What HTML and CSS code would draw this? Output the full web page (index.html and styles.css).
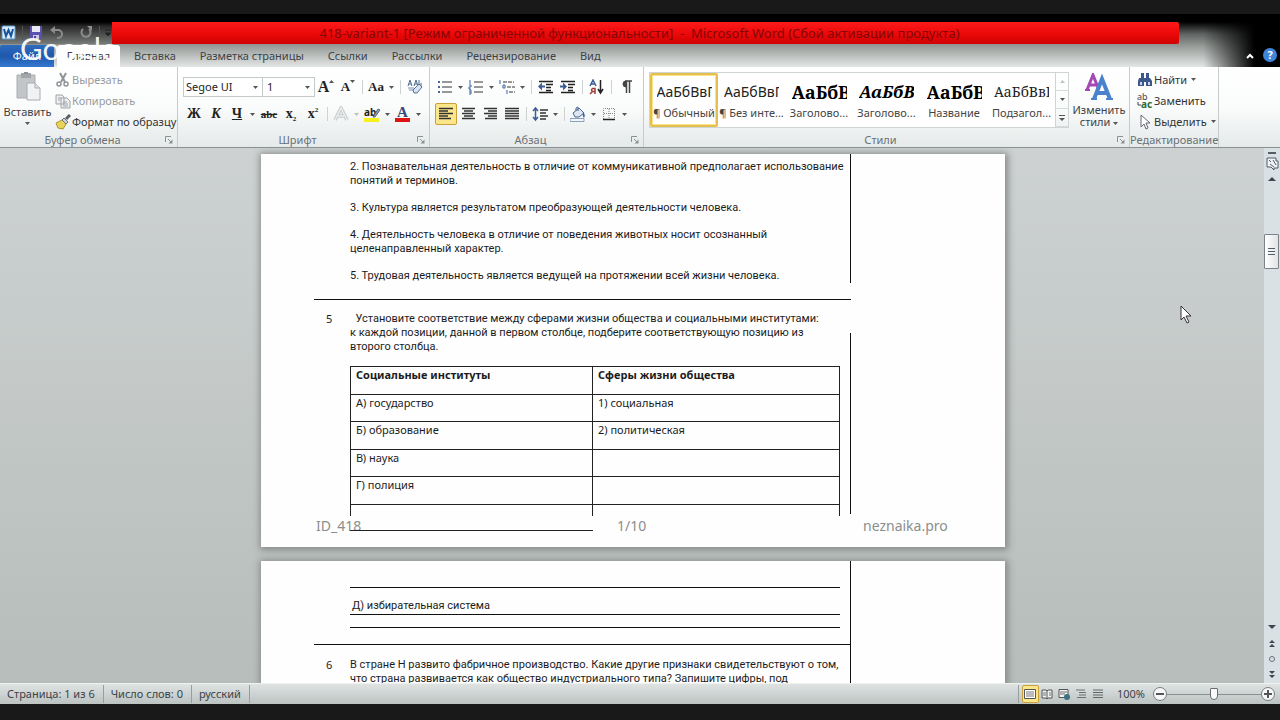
FILE: index.html
```html
<!DOCTYPE html>
<html lang="ru">
<head>
<meta charset="utf-8">
<title>418-variant-1 - Microsoft Word</title>
<link rel="stylesheet" href="styles.css">
</head>
<body>
<svg class="defs" aria-hidden="true">
  <symbol id="caret" viewBox="0 0 5 3"><path d="M0 0h5L2.500 3z" fill="#555"/></symbol>
  <symbol id="launcher" viewBox="0 0 8 8"><path d="M.5 6V.5H6M3 3l3 3" fill="none" stroke="#8b9296"/><path d="M7.500 3.500v4h-4z" fill="#8b9296"/></symbol>
</svg>
<div class="window">
  <header class="top">
    <div class="titlebar">
      <div class="quick">
        <svg class="i16" viewBox="0 0 16 16"><rect x="1" y="1" width="13" height="13" rx="1" fill="#dcebf8" stroke="#5b9bd0"/><path d="M3 4l2 7 2.500-6L10 11l2-7" fill="none" stroke="#16559c" stroke-width="2"/></svg>
        <i class="qsep"></i>
        <button aria-label="Сохранить"><svg class="i16" viewBox="0 0 16 16"><path d="M2 1h12v13H3l-1-1z" fill="#5b52b0"/><path d="M4 1h8v6H4z" fill="#e9e9f6"/><path d="M5 10h6v4H5z" fill="#c9c9e4"/><path d="M6 11h2v3H6z" fill="#4a3f99"/></svg></button>
        <button aria-label="Отменить"><svg class="i16" viewBox="0 0 16 16"><path d="M5 5h4a3.500 3.500 0 010 8H8" fill="none" stroke="#8c8c8c" stroke-width="2"/><path d="M1 5l5-4v8z" fill="#8c8c8c"/></svg></button>
        <button class="redo" aria-label="Повторить"><svg class="i16" viewBox="0 0 16 16"><path d="M5 4a4.500 4.500 0 106 0" fill="none" stroke="#8c8c8c" stroke-width="2"/><path d="M9 1h5v5z" fill="#8c8c8c"/></svg></button>
        <i class="qsep"></i>
        <button class="more" aria-label="Настройка панели"><svg class="i8" viewBox="0 0 8 8"><path d="M1 1h6M1.500 4h5L4 7z" fill="#222" stroke="#222"/></svg></button>
      </div>
      <h1 class="title">418-variant-1 [Режим ограниченной функциональности]&nbsp; -&nbsp; Microsoft Word (Сбой активации продукта)</h1>
    </div>
    <nav class="tabs">
      <button class="file">Файл</button>
      <button class="tab active">Главная</button>
      <button class="tab">Вставка</button>
      <button class="tab">Разметка страницы</button>
      <button class="tab">Ссылки</button>
      <button class="tab">Рассылки</button>
      <button class="tab">Рецензирование</button>
      <button class="tab">Вид</button>
      <span class="spacer"></span>
      <button class="fold" aria-label="Свернуть ленту"><svg class="i8" viewBox="0 0 8 8"><path d="M1 6l3-3 3 3" fill="none" stroke="#fff" stroke-width="2"/></svg></button>
      <button class="help" aria-label="Справка">?</button>
    </nav>
    <div class="watermark">Google</div>
  </header>

  <section class="ribbon">
    <div class="group clipboard">
      <div class="body">
        <button class="big paste"><svg viewBox="0 0 28 30"><path d="M3 3h18v23H3z" fill="#c3c6c8" stroke="#aaadb0"/><path d="M7 1h10v5H7z" fill="#a2a6aa"/><path d="M10 0h4v2h-4z" fill="#8e9296"/><path d="M13 11h8l5 5v12H13z" fill="#f1f2f3" stroke="#a9acb0"/><path d="M21 11v5h5" fill="#dcdee0" stroke="#a9acb0"/></svg><span>Вставить</span><svg class="caret"><use href="#caret"/></svg></button>
        <div class="stack">
          <button class="off"><svg class="i16" viewBox="0 0 16 16"><path d="M5 1l5 9M11 1L6 10" stroke="#8f9497" stroke-width="2"/><circle cx="4" cy="12" r="2" fill="none" stroke="#8f9497" stroke-width="1.500"/><circle cx="11" cy="12" r="2" fill="none" stroke="#8f9497" stroke-width="1.500"/></svg>Вырезать</button>
          <button class="off"><svg class="i16" viewBox="0 0 16 16"><path d="M1 2h6l2 2v7H1zM6 5h6l3 3v7H6z" fill="#eceeef" stroke="#9fa4a7"/><path d="M3 5h3M3 7h2M8 9h4M8 11h5M8 13h5" stroke="#9fa4a7"/></svg>Копировать</button>
          <button><svg class="i16" viewBox="0 0 16 16"><path d="M1 9l6-3 4 4-3 5-5-1z" fill="#e8d45a" stroke="#a99531"/><path d="M7 6l2-2 4 4-2 2z" fill="#cfd3d8" stroke="#6c7278"/><path d="M11 5l4-4" stroke="#596068" stroke-width="3"/></svg>Формат по образцу</button>
        </div>
      </div>
      <footer><span>Буфер обмена</span><svg class="i8"><use href="#launcher"/></svg></footer>
    </div>

    <div class="group font">
      <div class="rows">
        <div class="row">
          <label class="combo family"><select aria-label="Шрифт"><option>Segoe UI</option></select><svg class="caret"><use href="#caret"/></svg></label>
          <label class="combo size"><select aria-label="Размер шрифта"><option>1</option></select><svg class="caret"><use href="#caret"/></svg></label>
          <button class="b serif grow" aria-label="Увеличить шрифт">A<svg class="mark flip"><use href="#caret"/></svg></button>
          <button class="b serif shrink" aria-label="Уменьшить шрифт">A<svg class="mark"><use href="#caret"/></svg></button>
          <i class="sep"></i>
          <button class="b split serif aa"><span>Aa</span><svg class="caret"><use href="#caret"/></svg></button>
          <i class="sep"></i>
          <button class="b" aria-label="Очистить формат"><svg class="i16" viewBox="0 0 16 16"><path d="M1 7l2-6 2 6M2 5h2M7 7l2-6 2 6M8 5h2M12 1v6h2V4" fill="none" stroke="#4d6b91"/><path d="M1 9h6M2 11h4" stroke="#7b8fab"/><path d="M6 11l6-6 3 3-5 6H7z" fill="#d8e4f4" stroke="#53719a"/></svg></button>
        </div>
        <div class="row">
          <button class="b serif bold">Ж</button>
          <button class="b serif bold ital">К</button>
          <button class="b split serif bold"><span class="under">Ч</span><svg class="caret"><use href="#caret"/></svg></button>
          <button class="b serif strike">abc</button>
          <button class="b serif bold">x<sub>2</sub></button>
          <button class="b serif bold">x<sup>2</sup></button>
          <i class="sep"></i>
          <button class="b split" aria-label="Эффекты"><svg class="i16" viewBox="0 0 16 16"><path d="M2 14L8 2l6 12M5 10h6" fill="none" stroke="#c6cacc" stroke-width="3.500"/><path d="M2 14L8 2l6 12M5 10h6" fill="none" stroke="#eceeee" stroke-width="1.500"/></svg><svg class="caret faint"><use href="#caret"/></svg></button>
          <button class="b split" aria-label="Цвет выделения"><svg class="i16" viewBox="0 0 16 16"><path d="M0 12h15v4H0z" fill="#f7f021"/><text x="0" y="10" font-size="10" font-weight="700" font-family="Noto Sans, sans-serif" fill="#222">ab</text><path d="M9 11l5-8 2 1-5 7z" fill="#8ca0b8" stroke="#53677f"/></svg><svg class="caret"><use href="#caret"/></svg></button>
          <button class="b split" aria-label="Цвет текста"><svg class="i16" viewBox="0 0 16 16"><path d="M0 12h15v4H0z" fill="#dc1414"/><text x="2" y="11" font-size="15" font-weight="700" font-family="Liberation Serif, serif" fill="#334a78">A</text></svg><svg class="caret"><use href="#caret"/></svg></button>
        </div>
      </div>
      <footer><span>Шрифт</span><svg class="i8"><use href="#launcher"/></svg></footer>
    </div>

    <div class="group para">
      <div class="rows">
        <div class="row">
          <button class="b split" aria-label="Маркеры"><svg class="i16" viewBox="0 0 16 16"><path d="M1 3h2M1 8h2M1 13h2" stroke="#3f64a0" stroke-width="2"/><path d="M5 3h10M5 8h10M5 13h10" stroke="#333"/></svg><svg class="caret"><use href="#caret"/></svg></button>
          <button class="b split" aria-label="Нумерация"><svg class="i16" viewBox="0 0 16 16"><path d="M2 1v4M1 6h2v2H1v2h2M1 11h2v4H1m0-2h2" fill="none" stroke="#3f64a0"/><path d="M6 3h9M6 8h9M6 13h9" stroke="#333"/></svg><svg class="caret"><use href="#caret"/></svg></button>
          <button class="b split" aria-label="Многоуровневый список"><svg class="i16" viewBox="0 0 16 16"><path d="M1 1v4M4 6h2v3H4zM8 11v4" fill="none" stroke="#3f64a0"/><path d="M4 3h11M8 8h8M10 13h6" stroke="#333" stroke-dasharray="4 1"/></svg><svg class="caret"><use href="#caret"/></svg></button>
          <i class="sep"></i>
          <button class="b" aria-label="Уменьшить отступ"><svg class="i16" viewBox="0 0 16 16"><path d="M1 2.500h14M8 5.500h7M8 8.500h5M8 11.500h5M1 13.500h14" stroke="#222" stroke-width="1.500"/><path d="M0 7.500l4-4v3h3v2H4v3z" fill="#3d5d98"/></svg></button>
          <button class="b" aria-label="Увеличить отступ"><svg class="i16" viewBox="0 0 16 16"><path d="M1 2.500h14M8 5.500h7M8 8.500h5M8 11.500h5M1 13.500h14" stroke="#222" stroke-width="1.500"/><path d="M7 7.500l-4-4v3H0v2h3v3z" fill="#3d5d98"/></svg></button>
          <i class="sep"></i>
          <button class="b" aria-label="Сортировка"><svg class="i16" viewBox="0 0 16 16"><path d="M1 7l3-6 3 6M2 5h4" fill="none" stroke="#3c5c96" stroke-width="1.500"/><path d="M6 15V9.500H3.500q-2 1.500 0 3H6M4 12l-3 3" fill="none" stroke="#a33a3a" stroke-width="1.500"/><path d="M11.500 1v12M9 10l2.500 4L14 10" fill="none" stroke="#222" stroke-width="1.500"/></svg></button>
          <i class="sep"></i>
          <button class="b" aria-label="Знаки абзаца"><svg class="i16" viewBox="0 0 16 16"><path d="M7 2h7M8.500 2v12M11.500 2v12" stroke="#444" stroke-width="1.500" fill="none"/><path d="M8 2a3 3 0 000 6z" fill="#444" stroke="#444"/></svg></button>
        </div>
        <div class="row">
          <button class="b on" aria-label="По левому краю"><svg class="i16" viewBox="0 0 16 16"><path d="M1 2.500h14M1 5h9M1 7.500h14M1 10h9M1 12.500h12" stroke="#333" stroke-width="1.500"/></svg></button>
          <button class="b" aria-label="По центру"><svg class="i16" viewBox="0 0 16 16"><path d="M2 2.500h13M4 5h9M2 7.500h13M4 10h9M2 12.500h13" stroke="#333" stroke-width="1.500"/></svg></button>
          <button class="b" aria-label="По правому краю"><svg class="i16" viewBox="0 0 16 16"><path d="M2 2.500h13M6 5h9M2 7.500h13M6 10h9M3 12.500h12" stroke="#333" stroke-width="1.500"/></svg></button>
          <button class="b" aria-label="По ширине"><svg class="i16" viewBox="0 0 16 16"><path d="M1 2.500h14M1 5h14M1 7.500h14M1 10h14M1 12.500h14" stroke="#333" stroke-width="1.500"/></svg></button>
          <i class="sep"></i>
          <button class="b split" aria-label="Интервал"><svg class="i16" viewBox="0 0 16 16"><path d="M3.500 2v12M1 5l2.500-3L6 5M1 11l2.500 3L6 11" fill="none" stroke="#3d5d98" stroke-width="1.500"/><path d="M8 4h8M8 7h6M8 10h8M8 13h6" stroke="#333" stroke-width="1.500"/></svg><svg class="caret"><use href="#caret"/></svg></button>
          <i class="sep"></i>
          <button class="b split" aria-label="Заливка"><svg class="i16" viewBox="0 0 16 16"><path d="M0 12.500h14v3H0z" fill="#f2f4f7" stroke="#8ba0be"/><path d="M3 7l6-5 5 5-5 4H5z" fill="#dce6f2" stroke="#4b6590"/><path d="M6 5V2l2-1v4" fill="none" stroke="#4b6590"/><path d="M13 6q3 3 1 6-2-2-1-6z" fill="#3b66a8"/></svg><svg class="caret"><use href="#caret"/></svg></button>
          <button class="b split" aria-label="Границы"><svg class="i16" viewBox="0 0 16 16"><path d="M2.500 13V2.500h11V13M8 3v10M3 7.500h10" fill="none" stroke="#888" stroke-dasharray="1 1"/><path d="M2 13.500h12" stroke="#222" stroke-width="1.500"/></svg><svg class="caret"><use href="#caret"/></svg></button>
        </div>
      </div>
      <footer><span>Абзац</span><svg class="i8"><use href="#launcher"/></svg></footer>
    </div>

    <div class="group styles">
      <div class="body">
        <div class="gallery">
          <button class="style on"><b class="pv">АаБбВвГ</b><span>¶ Обычный</span></button>
          <button class="style"><b class="pv">АаБбВвГ</b><span>¶ Без инте...</span></button>
          <button class="style"><b class="pv head">АаБбВ</b><span>Заголово...</span></button>
          <button class="style"><b class="pv head em">АаБбВв</b><span>Заголово...</span></button>
          <button class="style"><b class="pv head">АаБбВ</b><span>Название</span></button>
          <button class="style"><b class="pv sub">АаБбВвГ</b><span>Подзагол...</span></button>
        </div>
        <div class="scroller">
          <button aria-label="Вверх"><svg class="caret flip faint"><use href="#caret"/></svg></button>
          <button aria-label="Вниз"><svg class="caret"><use href="#caret"/></svg></button>
          <button aria-label="Ещё"><svg class="i8" viewBox="0 0 8 8"><path d="M1 1.500h6" stroke="#555"/><path d="M1 4h6L4 7z" fill="#555"/></svg></button>
        </div>
        <button class="big change"><svg viewBox="0 0 28 28"><path d="M2 17L8 2l6 15M5 12h7" fill="none" stroke="#a548b4" stroke-width="3"/><path d="M0 17h5" stroke="#a548b4" stroke-width="2"/><path d="M9 26l8-20 8 20M12 20h10" fill="none" stroke="#4a82cc" stroke-width="4"/><path d="M6 26h6M21 26h7" stroke="#4a82cc" stroke-width="2"/></svg><span>Изменить<br>стили <svg class="caret"><use href="#caret"/></svg></span></button>
      </div>
      <footer><span>Стили</span><svg class="i8"><use href="#launcher"/></svg></footer>
    </div>

    <div class="group edit">
      <div class="stack">
        <button><svg class="i16" viewBox="0 0 16 16"><path d="M4 1h3v5H4zM9 1h3v5H9zM2 6h5v8H1V9zM9 6h4l2 3v5H9zM7 6h2v4H7z" fill="#3c5789"/><path d="M3 10h2v3H3zM11 10h2v3h-2z" fill="#c5d3e8"/></svg>Найти<svg class="caret"><use href="#caret"/></svg></button>
        <button><svg class="i16" viewBox="0 0 16 16"><text x="0" y="7" font-size="9" font-family="Noto Sans, sans-serif" fill="#444">ab</text><text x="4" y="15" font-size="10" font-weight="700" font-family="Noto Sans, sans-serif" fill="#2d6a3a">ac</text><path d="M1 9v3h3" fill="none" stroke="#445"/></svg>Заменить</button>
        <button><svg class="i16" viewBox="0 0 16 16"><path d="M4 1v12l3-3 2 5 2-1-2-5h4z" fill="#fff" stroke="#667"/></svg>Выделить<svg class="caret"><use href="#caret"/></svg></button>
      </div>
      <footer><span>Редактирование</span></footer>
    </div>
  </section>

  <main class="work">
    <div class="canvas">
      <article class="page">
        <section class="question">
          <span class="num"></span>
          <div class="text">
            <p>2. Познавательная деятельность в отличие от коммуникативной предполагает использование<br>понятий и терминов.</p>
            <p>3. Культура является результатом преобразующей деятельности человека.</p>
            <p>4. Деятельность человека в отличие от поведения животных носит осознанный<br>целенаправленный характер.</p>
            <p>5. Трудовая деятельность является ведущей на протяжении всей жизни человека.</p>
          </div>
          <i class="rule"></i>
        </section>
        <hr class="divider spaced">
        <section class="question five">
          <span class="num">5</span>
          <div class="text">
            <p>&nbsp; Установите соответствие между сферами жизни общества и социальными институтами:<br>к каждой позиции, данной в первом столбце, подберите соответствующую позицию из<br>второго столбца.</p>
            <table class="match">
              <thead><tr><th>Социальные институты</th><th>Сферы жизни общества</th></tr></thead>
              <tbody>
                <tr><td>А) государство</td><td>1) социальная</td></tr>
                <tr><td>Б) образование</td><td>2) политическая</td></tr>
                <tr><td>В) наука</td><td></td></tr>
                <tr><td>Г) полиция</td><td></td></tr>
                <tr class="cut"><td></td><td></td></tr>
              </tbody>
            </table>
          </div>
          <i class="rule late"></i>
        </section>
        <footer class="pagefoot"><span>ID_418</span><span>1/10</span><span>neznaika.pro</span></footer>
      </article>
      <article class="page next">
        <section class="question">
          <span class="num"></span>
          <div class="text tail"><hr><p>Д) избирательная система</p><hr><hr></div>
          <i class="rule"></i>
        </section>
        <hr class="divider">
        <section class="question six">
          <span class="num">6</span>
          <div class="text"><p>В стране Н развито фабричное производство. Какие другие признаки свидетельствуют о том,<br>что страна развивается как общество индустриального типа? Запишите цифры, под</p></div>
          <i class="rule"></i>
        </section>
      </article>
      <svg class="cursor" viewBox="0 0 12 19"><path d="M1 1v14l3-3 3 6 2-1-3-6h5z" fill="#fff" stroke="#333"/></svg>
    </div>
    <aside class="scrollbar">
      <i class="grip"></i>
      <button aria-label="Линейка"><svg class="i16" viewBox="0 0 16 16"><path d="M3 3h9v3h2v7h-4v2l-3-3H3z" fill="#eef2f4" stroke="#555d66"/><path d="M5 5l2 2M9 5l3 5M6 9l4 3" stroke="#555d66"/></svg></button>
      <button class="up" aria-label="Вверх"><svg class="i8" viewBox="0 0 8 8"><path d="M0 6l4-4 4 4z" fill="#40464d"/></svg></button>
      <div class="track"><div class="thumb"><i></i><i></i><i></i></div></div>
      <button aria-label="Вниз"><svg class="i8" viewBox="0 0 8 8"><path d="M0 2h8L4 6z" fill="#40464d"/></svg></button>
      <button aria-label="Предыдущая страница"><svg class="i8" viewBox="0 0 8 8"><path d="M1 4l3-3 3 3zM1 8l3-3 3 3z" fill="#40464d"/></svg></button>
      <button aria-label="Объект перехода"><svg class="i8" viewBox="0 0 8 8"><circle cx="4" cy="4" r="2.500" fill="none" stroke="#6b7278"/></svg></button>
      <button aria-label="Следующая страница"><svg class="i8" viewBox="0 0 8 8"><path d="M1 0h6L4 3zM1 4h6L4 7z" fill="#40464d"/></svg></button>
    </aside>
  </main>

  <footer class="status">
    <span class="cell">Страница: 1 из 6</span>
    <span class="cell">Число слов: 0</span>
    <span class="cell">русский</span>
    <span class="spacer"></span>
    <div class="views">
      <button class="on" aria-label="Разметка страницы"><svg viewBox="0 0 12 12"><path d="M.5 1.500h11v9H.5z" fill="#fff" stroke="#555"/><path d="M2 4h8M2 6h8M2 8h8" stroke="#777"/></svg></button>
      <button aria-label="Режим чтения"><svg viewBox="0 0 12 12"><path d="M1 2h4l1 1 1-1h4v8H7l-1 1-1-1H1zM6 3v8" fill="#f0f2f2" stroke="#555"/><path d="M2 5h3M2 7h3M8 5h2M8 7h2" stroke="#777"/></svg></button>
      <button aria-label="Веб-документ"><svg viewBox="0 0 12 12"><path d="M1 1.500h9v8H1z" fill="#f0f2f2" stroke="#555"/><path d="M2 4h7M2 6h5" stroke="#777"/><circle cx="9" cy="9" r="3" fill="#3b7480"/></svg></button>
      <button aria-label="Структура"><svg viewBox="0 0 12 12"><path d="M1 2h9M4 4.500h7M4 7h7M2 9.500h9" stroke="#6b7070"/></svg></button>
      <button aria-label="Черновик"><svg viewBox="0 0 12 12"><path d="M1 2h10M1 4.500h10M1 7h10M1 9.500h10" stroke="#666"/></svg></button>
    </div>
    <span class="pct">100%</span>
    <button class="round" aria-label="Уменьшить"><svg viewBox="0 0 8 8"><path d="M0 4h8" stroke="#555" stroke-width="2"/></svg></button>
    <input class="zoom" type="range" min="0" max="200" value="100" aria-label="Масштаб">
    <button class="round" aria-label="Увеличить"><svg viewBox="0 0 8 8"><path d="M0 4h8M4 0v8" stroke="#555" stroke-width="2"/></svg></button>
  </footer>
</div>
</body>
</html>
```
FILE: styles.css
```css
* { box-sizing: border-box; }
body {
  margin: 0;
  background: #191919;
  font: 11px/14px "Noto Sans", "Open Sans", sans-serif;
  color: #3c4247;
}
.defs { position: absolute; width: 0; height: 0; }
button {
  margin: 0; padding: 0; border: 0; background: none;
  font: inherit; color: inherit;
  display: flex; align-items: center; justify-content: center;
}
svg { flex: none; }
.i16 { width: 16px; height: 16px; }
.i8 { width: 8px; height: 8px; }
.caret { width: 5px; height: 3px; }
.spacer { flex: 1; }

.window { display: flex; flex-direction: column; height: 100vh; padding: 14px 0 16px; overflow: hidden; }

/* Title bar and tabs */
.top {
  position: relative;
  padding-top: 8px;
  background:
    linear-gradient(90deg, transparent 94%, #000 98%),
    linear-gradient(#000 0, #000 8px, #5f6361 20px, #969b98 32px, #e4e7e6 53px);
}
.titlebar { display: flex; height: 22px; }
.quick {
  display: flex; align-items: center; gap: 5px;
  width: 112px; padding-left: 1px;
  background: linear-gradient(#000, #2a2a2a 20%, #777b79);
}
.quick .redo { margin-left: 8px; }
.qsep { width: 1px; height: 14px; background: #555; }
.title {
  flex: 1; margin: 0 101px 0 0; padding-right: 12px;
  border-radius: 0 2px 2px 0;
  background: linear-gradient(#fb1a1a, #ee0a0a 50%, #cf0202);
  color: #850606;
  font-size: 13px; font-weight: 400; line-height: 22px; text-align: center;
  white-space: nowrap;
}
.tabs { display: flex; align-items: stretch; height: 23px; padding-top: 1px; }
.file { width: 54px; margin-right: 3px; background: linear-gradient(#2d6cc0, #1f58ac 50%, #3478d0); color: #fff; border-radius: 2px 2px 0 0; }
.tab { padding: 0 12px; }
.tab.active { width: 63px; margin-right: 2px; padding: 0; background: #fdfefd; border-radius: 3px 3px 0 0; }
.fold { width: 14px; }
.help {
  width: 14px; height: 14px; margin: 3px 3px 0 6px; border-radius: 50%;
  background: #3f86d8; color: #fff; font-weight: 700;
}
.watermark {
  position: absolute; left: 20px; top: 15px;
  font: 31px/38px "Lato", sans-serif; color: #fff; opacity: .93;
}

/* Ribbon */
.ribbon {
  display: flex; height: 81px; flex: none;
  background: linear-gradient(#fff, #fafcfb 50%, #e5e9e9);
  border-bottom: 1px solid #8b9190;
}
.group { display: flex; flex-direction: column; padding-top: 5px; border-right: 1px solid #c6cbcc; }
.group > footer {
  display: flex; align-items: center; height: 14px; margin-top: auto; padding: 0 4px 0 0;
  color: #6a7177;
}
.group > footer span { flex: 1; text-align: center; }
.clipboard { width: 178px; }
.font { width: 252px; }
.para { width: 214px; }
.styles { width: 486px; }
.edit { width: 89px; }
.edit > footer { padding: 0; }
.body { display: flex; }
.big { flex-direction: column; justify-content: flex-start; }
.paste { width: 55px; gap: 3px; }
.paste > svg:first-child { width: 28px; height: 30px; }
.stack { display: flex; flex-direction: column; align-items: flex-start; }
.stack button { gap: 1px; height: 21px; color: #333; white-space: nowrap; }
.stack .off { color: #989c9f; }
.rows { display: flex; flex-direction: column; gap: 5px; padding: 4px 0 0 5px; }
.row { display: flex; align-items: center; height: 22px; }
.b { width: 22px; height: 22px; color: #222; }
.split { width: 31px; justify-content: flex-start; gap: 5px; padding-left: 2px; }
.split > span { width: 16px; text-align: center; }
.aa { font-size: 13px; }
.sep { width: 1px; height: 14px; margin: 0 3px; background: #cdd2d3; }
.serif { font-family: "Liberation Serif", serif; font-weight: 700; }
.bold { font-size: 14px; }
.ital { font-style: italic; }
.under { text-decoration: underline; }
.strike { font-size: 11px; text-decoration: line-through; }
.grow { font-size: 16px; }
.shrink { font-size: 13px; }
.b sup, .b sub { font-size: 7px; line-height: 8px; }
.b sup { align-self: flex-start; padding-top: 3px; }
.b sub { align-self: flex-end; padding-bottom: 2px; }
.mark { width: 5px; height: 3px; align-self: flex-start; margin-top: 4px; }
.flip { transform: rotate(180deg); }
.faint { opacity: .35; }
.b.on, .views .on { background: #fbe68b; border: 1px solid #c9a13a; border-radius: 2px; }
.combo { display: flex; align-items: center; height: 20px; padding: 0 4px; border: 1px solid #c4c9cb; background: #fff; }
.combo select { flex: 1; min-width: 0; padding: 0; border: 0; background: none; appearance: none; font: inherit; color: #222; }
.family { width: 80px; padding-left: 2px; }
.size { width: 52px; border-left: 0; }
.styles .body { padding-left: 5px; }
.gallery { display: flex; height: 56px; border: 1px solid #cfd4d5; border-right: 0; background: #fff; }
.style { flex-direction: column; width: 68px; padding: 5px 5px 0; justify-content: flex-start; color: #444; white-space: nowrap; }
.style:nth-child(even) { width: 67px; }
.style.on { border: 2px solid #e3bf4d; outline: 1px solid #f9e38b; outline-offset: -3px; padding: 3px 3px 0; border-radius: 2px; }
.pv { width: 55px; height: 28px; line-height: 28px; overflow: hidden; font-size: 14px; font-weight: 400; color: #222; text-align: left; }
.pv.head { font: 700 18px/28px "Noto Serif", "Liberation Serif", serif; color: #000; }
.pv.em { font-style: italic; font-size: 17px; }
.pv.sub { font: 14px/28px "Noto Serif", "Liberation Serif", serif; }
.scroller { display: flex; flex-direction: column; width: 14px; height: 56px; border: 1px solid #cfd4d5; }
.scroller button { flex: 1; border-bottom: 1px solid #d6dadb; }
.change { flex: 1; gap: 3px; padding-top: 1px; text-align: center; line-height: 12px; }
.change > svg { width: 28px; height: 28px; }
.change .caret { vertical-align: middle; }
.edit .stack { padding: 0 0 0 7px; margin-top: -3px; }
.edit .caret { margin-left: 3px; }
.clipboard .stack { margin-top: -3px; }

/* Document */
.work { display: flex; flex: 1; min-height: 0; }
.canvas {
  position: relative; flex: 1; overflow: hidden; padding: 6px 0 0 2px;
  background: linear-gradient(#cdd1d2, #c4c9c8 45%, #b6bdba);
}
.page {
  width: 744px; margin: 0 auto 14px; padding: 6px 154px 0 53px;
  background: #fefefe; color: #1c1c1c;
  box-shadow: 1px 1px 7px 2px #858a88;
}
.question { display: grid; grid-template-columns: 36px minmax(0, 1fr) 1px; }
.question p { margin: 0 0 13px; white-space: nowrap; font-family: Roboto, "Noto Sans", sans-serif; }
.question .text > p:last-child { margin-bottom: 0; }
.num { padding-left: 12px; }
.rule { background: #111; margin-top: -6px; }
hr { margin: 0; border: 0; height: 1px; background: #111; }
.divider.spaced { margin-top: 16px; }
.five { padding-top: 12px; }
.rule.late { margin: 21px 0 2px; }
.match { width: 490px; margin-top: -1px; border-collapse: collapse; }
.match th, .match td { border: 1px solid #222; padding: 1px 5px; text-align: left; vertical-align: top; }
.match th:first-child { width: 242px; }
.match tr { height: 27px; }
.match tr:nth-child(even), .match thead tr { height: 28px; }
.match .cut { height: 11px; }
.match .cut td { padding: 0; border-bottom: 0; }
.pagefoot {
  position: relative; display: grid; grid-template-columns: 301px 246px 1fr;
  margin-right: -100px; padding: 0 0 11px 2px;
  font-size: 14px; line-height: 20px; color: #8b8e8d;
}
.pagefoot::after { content: ""; position: absolute; left: 36px; top: 14px; width: 243px; height: 1px; background: #222; }
.next { padding-top: 0; }
.next .rule { margin-top: 0; }
.tail { width: 490px; padding: 26px 0 16px; }
.tail p { margin: 11px 0 1px; padding-left: 2px; }
.tail hr + hr { margin-top: 12px; }
.six p { padding-top: 13px; }
.six .num { padding-top: 13px; }
.cursor { position: absolute; right: 72px; top: 157px; width: 12px; height: 19px; }
.scrollbar { display: flex; flex-direction: column; align-items: center; width: 16px; background: #d9e1e5; }
.scrollbar button { width: 16px; height: 16px; }
.grip { width: 8px; height: 2px; margin: 4px 0 1px; background: #555d66; }
.track { flex: 1; align-self: stretch; padding-top: 47px; }
.thumb {
  display: flex; flex-direction: column; align-items: center; justify-content: center; gap: 2px;
  width: 15px; height: 35px; border: 1px solid #7b8388; border-radius: 1px;
  background: linear-gradient(90deg, #fff, #dfe4e6);
}
.thumb i { width: 7px; height: 1px; background: #555d66; }

/* Status bar */
.status {
  display: flex; align-items: center; height: 21px; flex: none;
  background: linear-gradient(#dfe4e3, #cdd3d2 50%, #bcc3c1);
  border-top: 1px solid #eef1f0;
}
.cell { padding: 0 8px 0 7px; line-height: 18px; border-right: 1px solid #979e9d; }
.views { display: flex; gap: 0; padding-left: 3px; border-left: 1px solid #979e9d; }
.views button { width: 17px; height: 18px; }
.views svg { width: 12px; height: 12px; }
.pct { margin: 0 8px 0 10px; }
.round { width: 14px; height: 14px; border: 1px solid #777d80; border-radius: 50%; background: #f6f8f8; }
.round svg { width: 8px; height: 8px; }
.zoom { width: 94px; height: 18px; margin: 0; appearance: none; background: linear-gradient(#8a9191, #8a9191) center / 100% 1px no-repeat; }
.zoom::-webkit-slider-thumb { appearance: none; width: 8px; height: 12px; border: 1px solid #666c70; border-radius: 1px 1px 4px 4px; background: #f8fafa; }
.status .round:last-child { margin-right: 5px; }
```
